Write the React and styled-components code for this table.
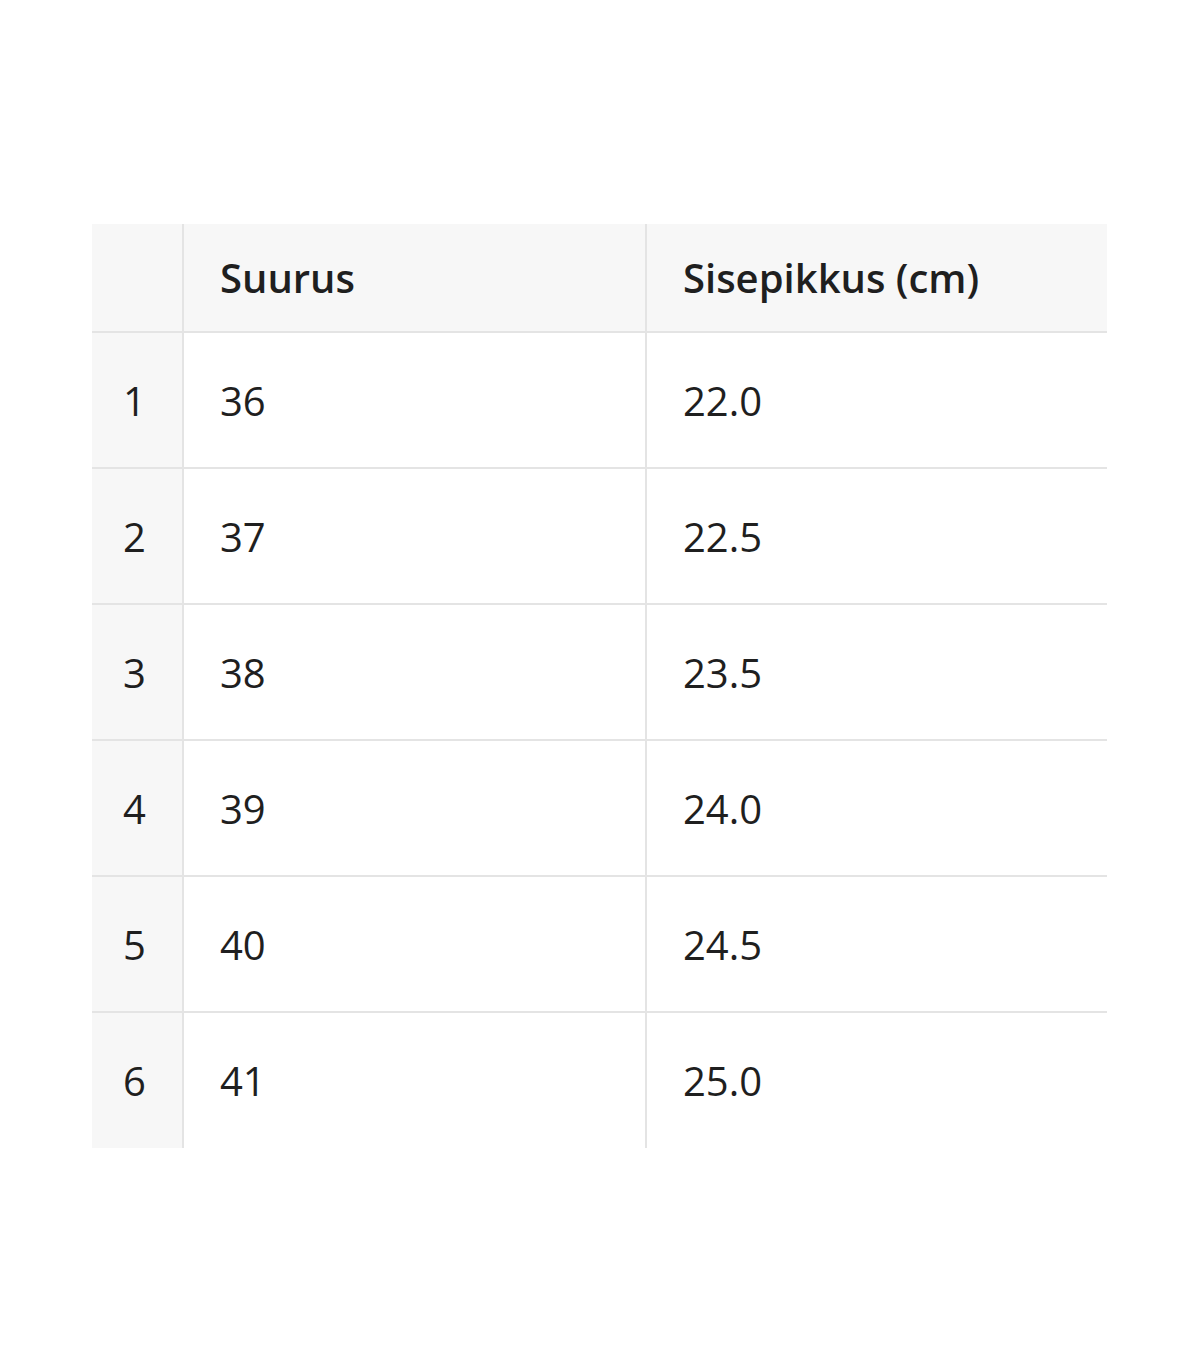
import React from "react";
import styled, { createGlobalStyle } from "styled-components";

const GlobalStyle = createGlobalStyle`
  html, body {
    margin: 0;
    padding: 0;
    background: #ffffff;
  }
  body {
    font-family: "Open Sans", "Noto Sans", "Liberation Sans", sans-serif;
    color: #1f1f1f;
  }
`;

const Page = styled.div`
  width: 1200px;
  height: 1372px;
  padding: 224px 0 0 92px;
  box-sizing: border-box;
`;

const Table = styled.table`
  border-collapse: collapse;
  table-layout: fixed;
  width: 1015px;
  font-size: 40px;
`;

const HeadCell = styled.th`
  height: 108px;
  padding: 0 0 0 36px;
  box-sizing: border-box;
  text-align: left;
  font-weight: 600;
  background: #f7f7f7;
  border-bottom: 2px solid #e4e4e4;
  border-left: ${(p) => (p.$first ? "none" : "2px solid #e4e4e4")};
  vertical-align: middle;
`;

const Cell = styled.td`
  height: 136px;
  padding: ${(p) => (p.$index ? "0 0 0 31px" : "0 0 0 36px")};
  box-sizing: border-box;
  font-weight: 400;
  background: ${(p) => (p.$index ? "#f7f7f7" : "#ffffff")};
  border-left: ${(p) => (p.$index ? "none" : "2px solid #e4e4e4")};
  vertical-align: middle;
`;

const Row = styled.tr`
  border-bottom: ${(p) => (p.$last ? "none" : "2px solid #e4e4e4")};
`;

const sizes = [
  ["36", "22.0"],
  ["37", "22.5"],
  ["38", "23.5"],
  ["39", "24.0"],
  ["40", "24.5"],
  ["41", "25.0"],
];

export default function App() {
  return (
    <Page>
      <GlobalStyle />
      <Table>
        <colgroup>
          <col style={{ width: "91px" }} />
          <col style={{ width: "463px" }} />
          <col style={{ width: "461px" }} />
        </colgroup>
        <thead>
          <tr>
            <HeadCell $first></HeadCell>
            <HeadCell>Suurus</HeadCell>
            <HeadCell>Sisepikkus (cm)</HeadCell>
          </tr>
        </thead>
        <tbody>
          {sizes.map(([size, length], i) => (
            <Row key={size} $last={i === sizes.length - 1}>
              <Cell $index>{i + 1}</Cell>
              <Cell>{size}</Cell>
              <Cell>{length}</Cell>
            </Row>
          ))}
        </tbody>
      </Table>
    </Page>
  );
}
